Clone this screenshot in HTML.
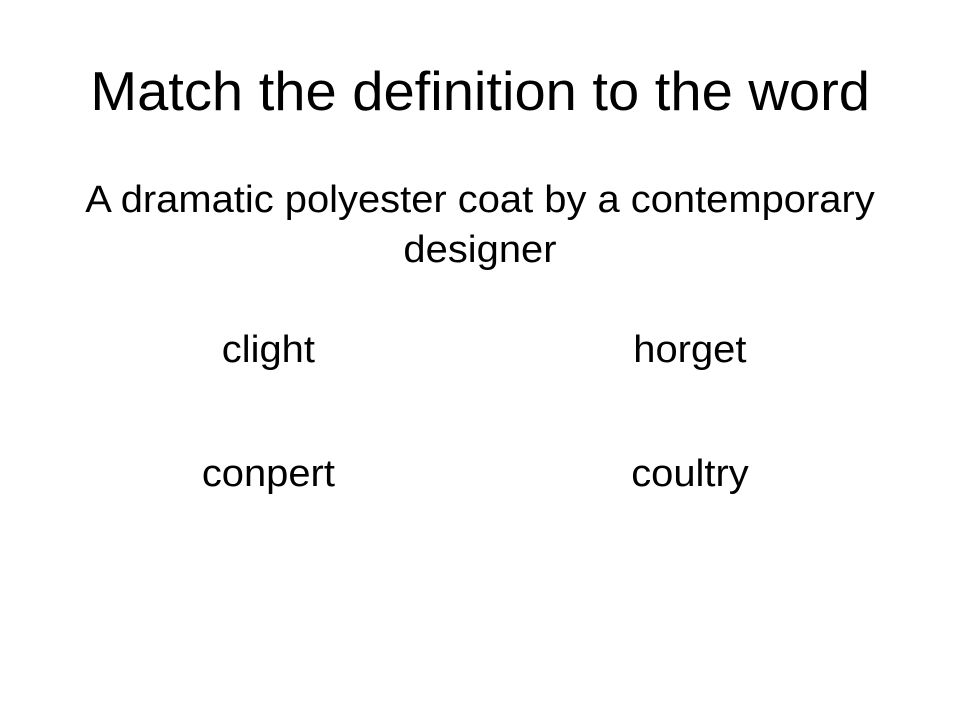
<!DOCTYPE html>
<html><head><meta charset="utf-8"><style>
body{margin:0;width:960px;height:720px;background:#fff;overflow:hidden;font-family:"Liberation Sans",Arial,sans-serif;color:#000;position:relative}
.l{position:absolute;left:0;width:960px;text-align:center;white-space:nowrap}
.l span{display:inline-block;transform-origin:center}
.w{position:absolute;width:400px;text-align:center;font-size:38px;white-space:nowrap}
.w span{display:inline-block;transform:scaleX(1.05)}
</style></head><body>
<div class="l" style="top:58px;font-size:55px;line-height:66px"><span style="transform:scaleX(1.02)">Match the definition to the word</span></div>
<div class="l" style="top:175px;font-size:38px;line-height:50px"><span style="transform:scaleX(1.05)">A dramatic polyester coat by a contemporary<br>designer</span></div>
<div class="w" style="left:68px;top:329px"><span>clight</span></div>
<div class="w" style="left:490px;top:329px"><span>horget</span></div>
<div class="w" style="left:68px;top:453px"><span>conpert</span></div>
<div class="w" style="left:490px;top:453px"><span>coultry</span></div>
</body></html>
